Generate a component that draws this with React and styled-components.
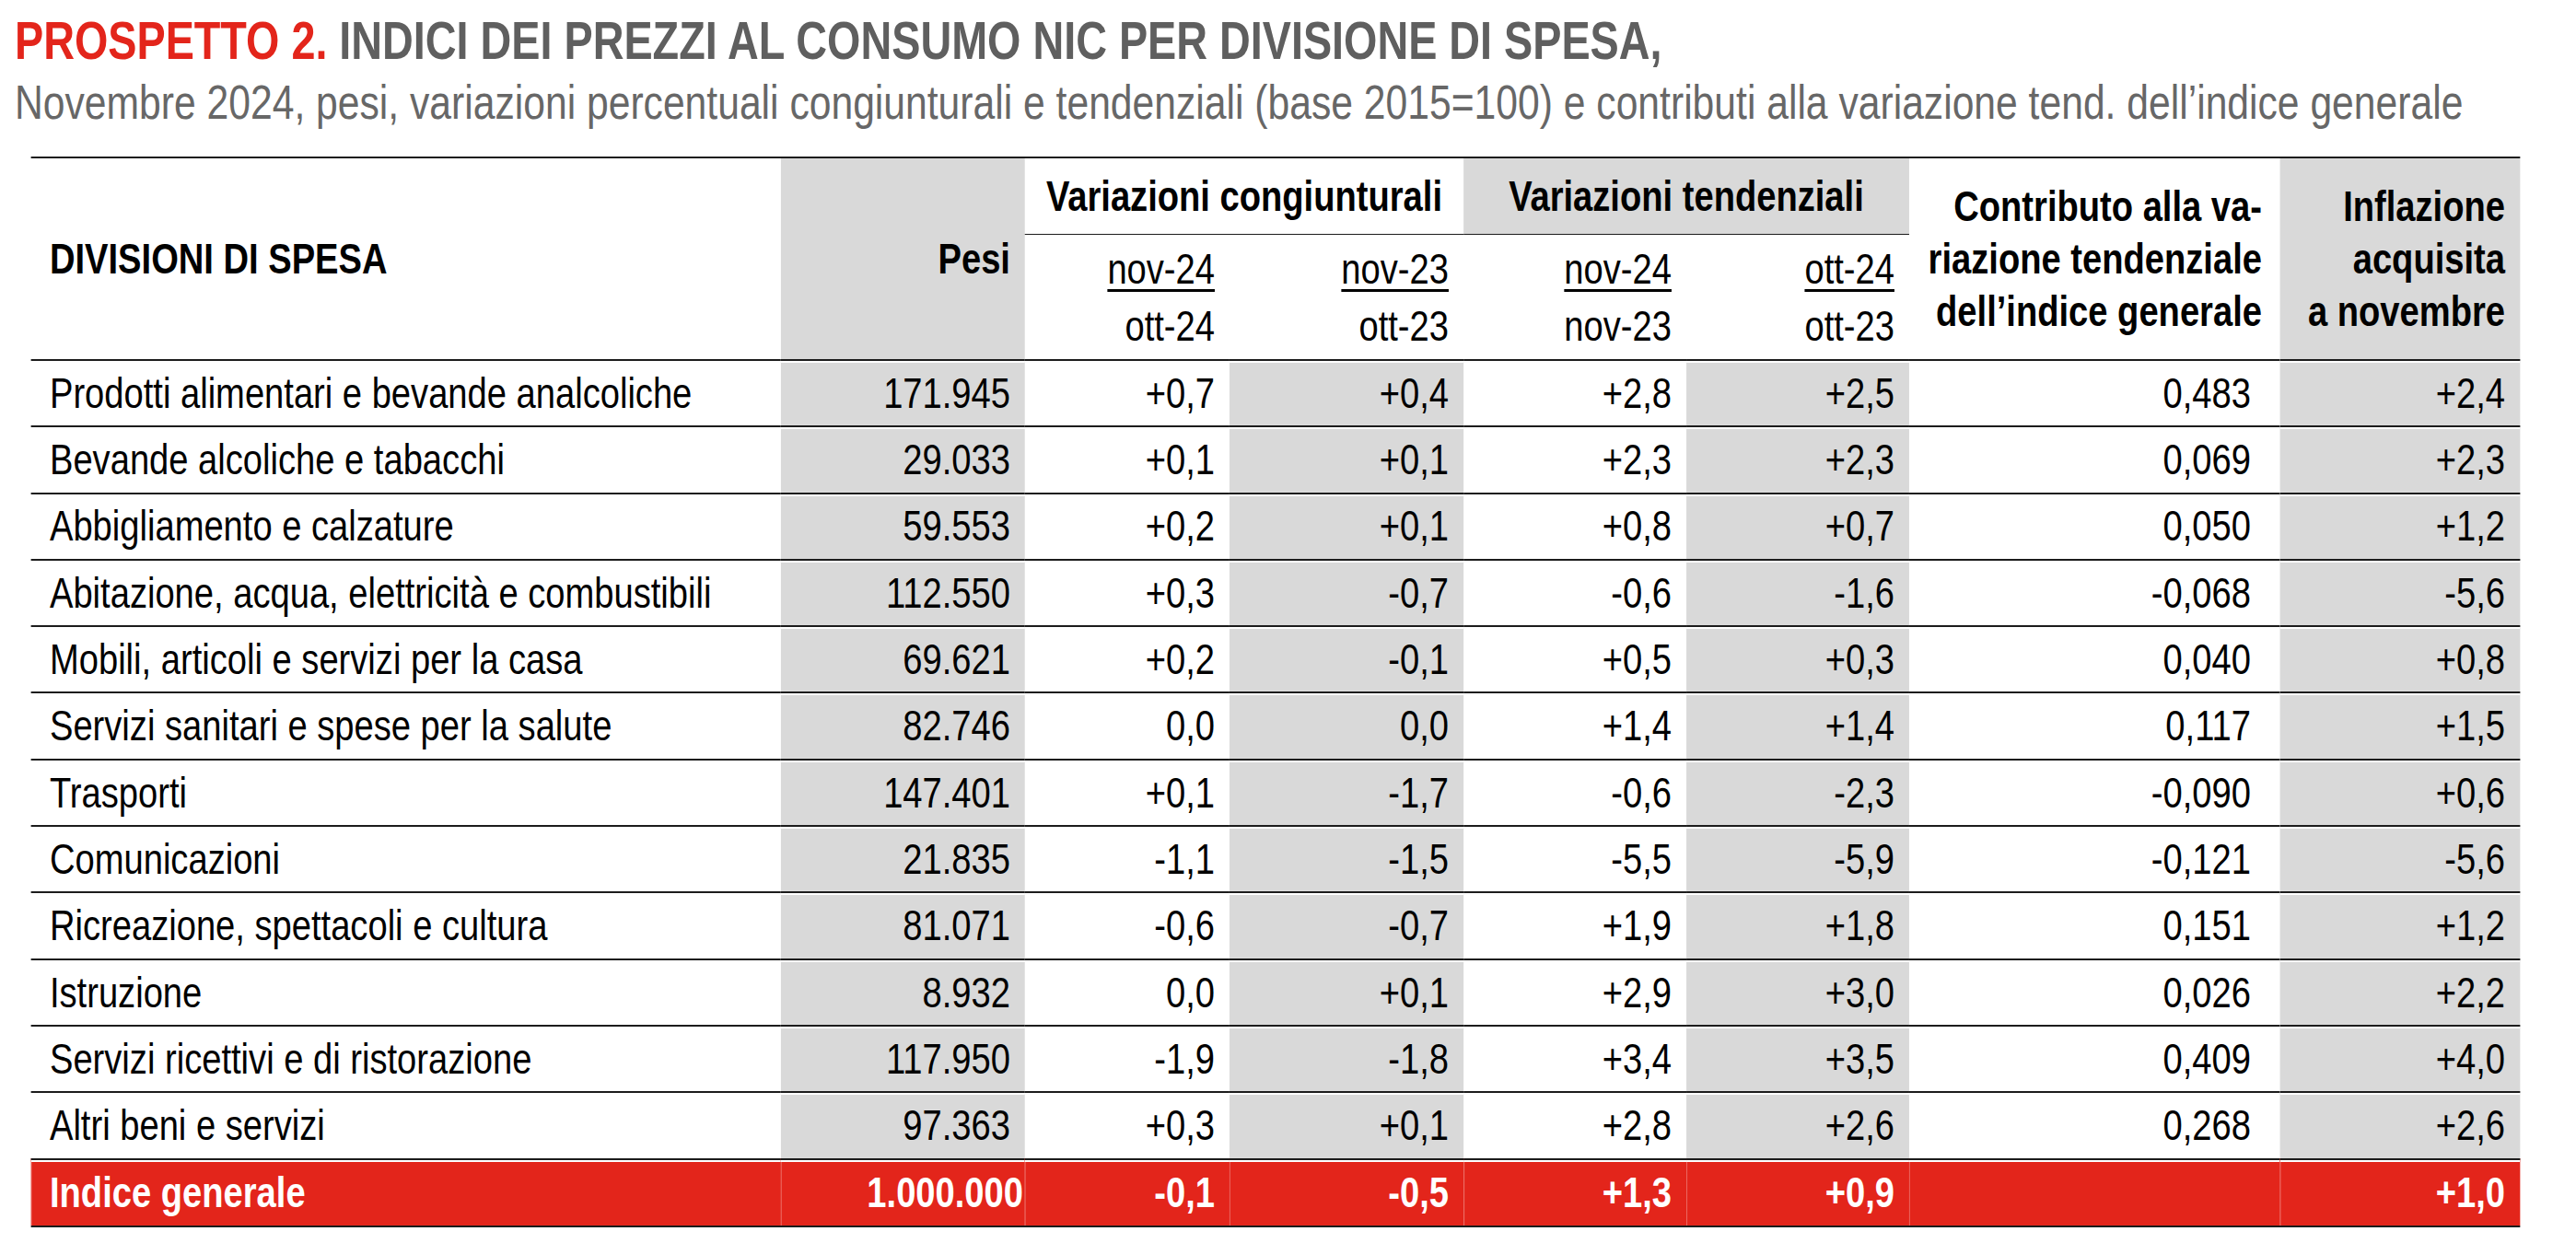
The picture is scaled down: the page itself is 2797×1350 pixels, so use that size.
import React from "react";
import styled, { createGlobalStyle } from "styled-components";

// No narrow face is installed, so the whole sheet is laid out wide and
// squeezed horizontally to get the Arial Narrow look of the original.
const S = 0.82;
const X = (px) => `${px / S}px`;

const GlobalStyle = createGlobalStyle`
  html, body {
    margin: 0;
    padding: 0;
    background: #fff;
  }
  body {
    font-family: "Liberation Sans Narrow", "Arial Narrow", "Liberation Sans", Arial, sans-serif;
    color: #000;
  }
`;

const RED = "#e3251b";
const GRAY = "#d9d9d9";
const LINE = "#1c1c1c";

const Viewport = styled.div`
  width: 2797px;
  overflow: hidden;
`;

const Sheet = styled.div`
  width: ${X(2797)};
  padding: 11px 0 0 ${X(16)};
  box-sizing: border-box;
  transform: scaleX(${S});
  transform-origin: 0 0;
`;

const Title = styled.h1`
  margin: 0;
  font-size: 57px;
  line-height: 66px;
  font-weight: 700;
  color: #5f5f5f;
  white-space: nowrap;

  span {
    color: ${RED};
  }
`;

const Subtitle = styled.p`
  margin: 5px 0 0;
  font-size: 52px;
  line-height: 58px;
  color: #676767;
  white-space: nowrap;
`;

const Table = styled.table`
  margin: 30px 0 0 ${X(18)};
  width: ${X(2702)};
  table-layout: fixed;
  border-collapse: separate;
  border-spacing: 0;
  border-top: 2px solid ${LINE};
  border-bottom: 2px solid ${LINE};
  font-size: 46.5px;
`;

const HeadCell = styled.th`
  box-sizing: border-box;
  padding: 0 ${(p) => X(p.$padRight ?? 16)} 0 ${(p) => X(p.$padLeft || 0)};
  font-weight: ${(p) => (p.$light ? 400 : 700)};
  text-align: ${(p) => p.$align || "right"};
  vertical-align: middle;
  background: ${(p) => (p.$shade ? GRAY : "transparent")};
  border-bottom: ${(p) => (p.$rule ? `1px solid ${LINE}` : "none")};
  line-height: ${(p) => p.$lh || 52}px;
  height: ${(p) => p.$h || 0}px;
  white-space: nowrap;
`;

const PeriodStack = styled.div`
  display: flex;
  flex-direction: column;
  align-items: flex-end;
  line-height: 62px;

  u {
    text-decoration-thickness: 3px;
    text-underline-offset: 6px;
  }
`;

const Row = styled.tr`
  height: 72.3px;
`;

const Cell = styled.td`
  box-sizing: border-box;
  height: 72.3px;
  padding: 0 ${(p) => X(p.$padRight ?? 16)} 0 ${(p) => X(p.$padLeft || 0)};
  text-align: ${(p) => p.$align || "right"};
  vertical-align: middle;
  white-space: nowrap;
  border-top: 2px solid ${LINE};
  line-height: 1;
  font-weight: ${(p) => (p.$total ? 700 : 400)};
  color: ${(p) => (p.$total ? "#fff" : "#000")};
  background: ${(p) => (p.$total ? RED : p.$shade ? GRAY : "transparent")};
  box-shadow: ${(p) =>
    p.$total
      ? `inset 0 2px 0 #fff, inset ${X(1)} 0 0 rgba(255,255,255,0.28)`
      : p.$shade
      ? "inset 0 2px 0 #fff"
      : "none"};
`;

const TotalRow = styled.tr`
  height: 73px;
`;

const widths = [814, 265, 222, 254, 242, 242, 403, 260];
const shaded = [false, true, false, true, false, true, false, true];

const rows = [
  ["Prodotti alimentari e bevande analcoliche", "171.945", "+0,7", "+0,4", "+2,8", "+2,5", "0,483", "+2,4"],
  ["Bevande alcoliche e tabacchi", "29.033", "+0,1", "+0,1", "+2,3", "+2,3", "0,069", "+2,3"],
  ["Abbigliamento e calzature", "59.553", "+0,2", "+0,1", "+0,8", "+0,7", "0,050", "+1,2"],
  ["Abitazione, acqua, elettricità e combustibili", "112.550", "+0,3", "-0,7", "-0,6", "-1,6", "-0,068", "-5,6"],
  ["Mobili, articoli e servizi per la casa", "69.621", "+0,2", "-0,1", "+0,5", "+0,3", "0,040", "+0,8"],
  ["Servizi sanitari e spese per la salute", "82.746", "0,0", "0,0", "+1,4", "+1,4", "0,117", "+1,5"],
  ["Trasporti", "147.401", "+0,1", "-1,7", "-0,6", "-2,3", "-0,090", "+0,6"],
  ["Comunicazioni", "21.835", "-1,1", "-1,5", "-5,5", "-5,9", "-0,121", "-5,6"],
  ["Ricreazione, spettacoli e cultura", "81.071", "-0,6", "-0,7", "+1,9", "+1,8", "0,151", "+1,2"],
  ["Istruzione", "8.932", "0,0", "+0,1", "+2,9", "+3,0", "0,026", "+2,2"],
  ["Servizi ricettivi e di ristorazione", "117.950", "-1,9", "-1,8", "+3,4", "+3,5", "0,409", "+4,0"],
  ["Altri beni e servizi", "97.363", "+0,3", "+0,1", "+2,8", "+2,6", "0,268", "+2,6"],
];

const total = ["Indice generale", "1.000.000", "-0,1", "-0,5", "+1,3", "+0,9", "", "+1,0"];

const periods = [
  ["nov-24", "ott-24"],
  ["nov-23", "ott-23"],
  ["nov-24", "nov-23"],
  ["ott-24", "ott-23"],
];

// right padding per column for data cells
const padFor = (i) => (i === 0 ? 0 : i === 6 ? 32 : 16);

const App = () => {
  return (
    <Viewport>
      <GlobalStyle />
      <Sheet>
        <Title>
          <span>PROSPETTO 2.</span> INDICI DEI PREZZI AL CONSUMO NIC PER DIVISIONE DI SPESA,
        </Title>
        <Subtitle>
          Novembre 2024, pesi, variazioni percentuali congiunturali e tendenziali (base 2015=100) e
          contributi alla variazione tend. dell’indice generale
        </Subtitle>

        <Table>
          <colgroup>
            {widths.map((w, i) => (
              <col key={i} style={{ width: X(w) }} />
            ))}
          </colgroup>
          <thead>
            <tr>
              <HeadCell rowSpan={2} $align="left" $padLeft={20} $padRight={0}>
                DIVISIONI DI SPESA
              </HeadCell>
              <HeadCell rowSpan={2} $shade>
                Pesi
              </HeadCell>
              <HeadCell colSpan={2} $align="center" $padRight={0} $rule $h={83}>
                Variazioni congiunturali
              </HeadCell>
              <HeadCell colSpan={2} $align="center" $padRight={0} $rule $shade $h={83}>
                Variazioni tendenziali
              </HeadCell>
              <HeadCell rowSpan={2} $padRight={20} $lh={57}>
                Contributo alla va-
                <br />
                riazione tendenziale
                <br />
                dell’indice generale
              </HeadCell>
              <HeadCell rowSpan={2} $shade $lh={57}>
                Inflazione
                <br />
                acquisita
                <br />a novembre
              </HeadCell>
            </tr>
            <tr>
              {periods.map(([top, bottom], i) => (
                <HeadCell key={i} $light $h={135}>
                  <PeriodStack>
                    <u>{top}</u>
                    <span>{bottom}</span>
                  </PeriodStack>
                </HeadCell>
              ))}
            </tr>
          </thead>
          <tbody>
            {rows.map((row, r) => (
              <Row key={r}>
                {row.map((v, i) => (
                  <Cell
                    key={i}
                    $align={i === 0 ? "left" : "right"}
                    $padLeft={i === 0 ? 20 : 0}
                    $padRight={padFor(i)}
                    $shade={shaded[i]}
                  >
                    {v}
                  </Cell>
                ))}
              </Row>
            ))}
            <TotalRow>
              {total.map((v, i) => (
                <Cell
                  key={i}
                  $total
                  $align={i === 0 ? "left" : "right"}
                  $padLeft={i === 0 ? 20 : 0}
                  $padRight={i === 1 ? 2 : padFor(i)}
                >
                  {v}
                </Cell>
              ))}
            </TotalRow>
          </tbody>
        </Table>
      </Sheet>
    </Viewport>
  );
};

export default App;
